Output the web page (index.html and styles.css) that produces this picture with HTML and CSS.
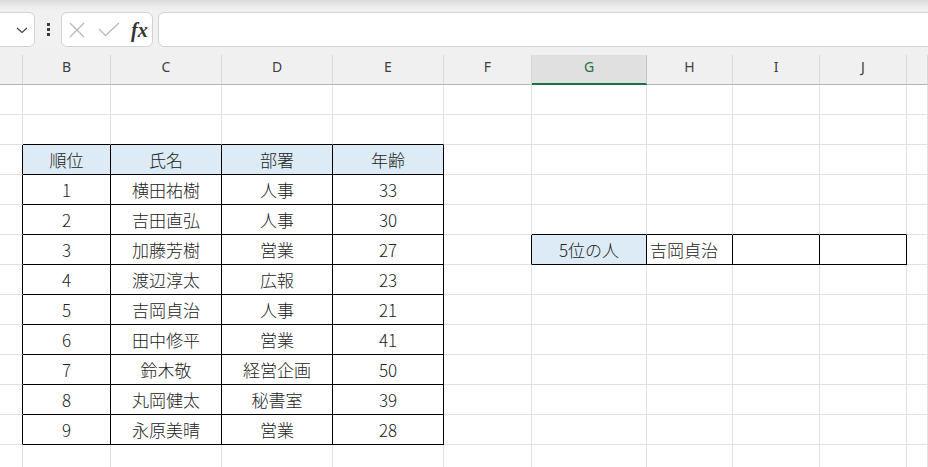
FILE: index.html
```html
<!DOCTYPE html>
<html lang="ja">
<head>
<meta charset="utf-8">
<title>Sheet</title>
<link rel="stylesheet" href="styles.css">
</head>
<body>
<div class="top">
  <div class="namebox">
    <svg class="chev" width="12" height="7" viewBox="0 0 12 7"><path d="M1 1 L6 5.5 L11 1" fill="none" stroke="#444" stroke-width="1.2"/></svg>
  </div>
  <div class="dots"><span></span><span></span><span></span></div>
  <div class="fxbox">
    <svg class="ico" width="16" height="16" viewBox="0 0 16 16"><path d="M1 1 L15 15 M15 1 L1 15" stroke="#b9b9b9" stroke-width="1.3" fill="none"/></svg>
    <svg class="ico chk" width="22" height="15" viewBox="0 0 22 15"><path d="M1 7 L7.5 13.5 L21 1" stroke="#b9b9b9" stroke-width="1.3" fill="none"/></svg>
    <span class="fx">fx</span>
  </div>
  <div class="formula"></div>
</div>
<div class="colhead">
  <div class="ch"></div>
  <div class="ch">B</div>
  <div class="ch">C</div>
  <div class="ch">D</div>
  <div class="ch">E</div>
  <div class="ch">F</div>
  <div class="ch sel">G</div>
  <div class="ch">H</div>
  <div class="ch">I</div>
  <div class="ch">J</div>
  <div class="ch"></div>
</div>
<div class="sheet">
  <div class="row"><div></div><div></div><div></div><div></div><div></div><div></div><div></div><div></div><div></div><div></div><div></div></div>
  <div class="row"><div></div><div class="bb"></div><div class="bb"></div><div class="bb"></div><div class="bb"></div><div></div><div></div><div></div><div></div><div></div><div></div></div>
  <div class="row"><div class="br"></div><div class="t hd">順位</div><div class="t hd">氏名</div><div class="t hd">部署</div><div class="t hd">年齢</div><div></div><div></div><div></div><div></div><div></div><div></div></div>
  <div class="row"><div class="br"></div><div class="t">1</div><div class="t">横田祐樹</div><div class="t">人事</div><div class="t">33</div><div></div><div></div><div></div><div></div><div></div><div></div></div>
  <div class="row"><div class="br"></div><div class="t">2</div><div class="t">吉田直弘</div><div class="t">人事</div><div class="t">30</div><div></div><div class="bb"></div><div class="bb"></div><div class="bb"></div><div class="bb"></div><div></div></div>
  <div class="row"><div class="br"></div><div class="t">3</div><div class="t">加藤芳樹</div><div class="t">営業</div><div class="t">27</div><div class="br"></div><div class="t hd">5位の人</div><div class="t left">吉岡貞治</div><div class="t"></div><div class="t"></div><div></div></div>
  <div class="row"><div class="br"></div><div class="t">4</div><div class="t">渡辺淳太</div><div class="t">広報</div><div class="t">23</div><div></div><div></div><div></div><div></div><div></div><div></div></div>
  <div class="row"><div class="br"></div><div class="t">5</div><div class="t">吉岡貞治</div><div class="t">人事</div><div class="t">21</div><div></div><div></div><div></div><div></div><div></div><div></div></div>
  <div class="row"><div class="br"></div><div class="t">6</div><div class="t">田中修平</div><div class="t">営業</div><div class="t">41</div><div></div><div></div><div></div><div></div><div></div><div></div></div>
  <div class="row"><div class="br"></div><div class="t">7</div><div class="t">鈴木敬</div><div class="t">経営企画</div><div class="t">50</div><div></div><div></div><div></div><div></div><div></div><div></div></div>
  <div class="row"><div class="br"></div><div class="t">8</div><div class="t">丸岡健太</div><div class="t">秘書室</div><div class="t">39</div><div></div><div></div><div></div><div></div><div></div><div></div></div>
  <div class="row"><div class="br"></div><div class="t">9</div><div class="t">永原美晴</div><div class="t">営業</div><div class="t">28</div><div></div><div></div><div></div><div></div><div></div><div></div></div>
  <div class="row"><div></div><div></div><div></div><div></div><div></div><div></div><div></div><div></div><div></div><div></div><div></div></div>
</div>
</body>
</html>
```

FILE: styles.css
```css
html, body {
  margin: 0;
  padding: 0;
}
body {
  width: 928px;
  height: 467px;
  overflow: hidden;
  background: #ffffff;
  font-family: "Noto Sans CJK JP", "Liberation Sans", sans-serif;
}

/* formula bar */
.top {
  height: 47px;
  box-sizing: border-box;
  padding-top: 12px;
  display: flex;
  align-items: flex-start;
  background: linear-gradient(#d9d9d9 0px, #ececec 7px, #f1f1f1 11px, #f1f1f1 100%);
}
.namebox {
  width: 43px;
  height: 35px;
  margin-left: -8px;
  box-sizing: border-box;
  background: #fff;
  border: 1px solid #d2d2d2;
  border-radius: 6px;
  display: flex;
  align-items: center;
  justify-content: flex-end;
  padding-right: 6px;
}
.chev {
  display: block;
  margin-top: 2px;
}
.dots {
  width: 26px;
  height: 35px;
  display: flex;
  flex-direction: column;
  align-items: center;
  justify-content: center;
  gap: 2px;
}
.dots span {
  width: 3px;
  height: 3px;
  background: #3c3c3c;
}
.fxbox {
  width: 92px;
  height: 35px;
  box-sizing: border-box;
  background: #fff;
  border: 1px solid #d2d2d2;
  border-radius: 6px;
  display: flex;
  align-items: center;
  padding-left: 7px;
}
.ico {
  display: block;
}
.chk {
  margin-left: 13px;
}
.fx {
  margin-left: 11px;
  font-family: "Liberation Serif", "DejaVu Serif", serif;
  font-style: italic;
  font-weight: bold;
  font-size: 20px;
  color: #333;
  line-height: 1;
}
.formula {
  flex: 1;
  margin-left: 5px;
  margin-right: -10px;
  height: 35px;
  box-sizing: border-box;
  background: #fff;
  border: 1px solid #d2d2d2;
  border-radius: 6px;
}

/* column headers */
.colhead {
  height: 38px;
  box-sizing: border-box;
  padding-top: 8px;
  background: #f0f0f0;
  display: grid;
  grid-template-columns: 23px 88px 111px 111px 111px 88px 115px 86px 87px 87px 21px;
}
.ch {
  box-sizing: border-box;
  height: 30px;
  border-right: 1px solid #d8d8d8;
  border-bottom: 1px solid #b4b4b4;
  display: flex;
  align-items: center;
  justify-content: center;
  padding-bottom: 6px;
  font-family: "Noto Sans", "Open Sans", sans-serif;
  font-size: 14px;
  color: #3f3f3f;
}
.ch.sel {
  background: #e0e0e0;
  color: #1e7145;
  border-bottom: 2px solid #1e7145;
  border-right-color: #c6c6c6;
  padding-bottom: 5px;
}

/* sheet grid */
.row {
  display: grid;
  grid-template-columns: 23px 88px 111px 111px 111px 88px 115px 86px 87px 87px 21px;
  height: 30px;
}
.row > div {
  box-sizing: border-box;
  border-right: 1px solid #e1e1e1;
  border-bottom: 1px solid #e1e1e1;
  display: flex;
  align-items: center;
  justify-content: center;
  font-size: 17px;
  font-weight: 300;
  color: #222;
  white-space: nowrap;
}
.row > div.t {
  border-right-color: #000;
  border-bottom-color: #000;
}
.row > div.bb {
  border-bottom-color: #000;
}
.row > div.br {
  border-right-color: #000;
}
.row > div.hd {
  background: #ddebf7;
}
.row > div.left {
  justify-content: flex-start;
  padding-left: 3px;
}
```
